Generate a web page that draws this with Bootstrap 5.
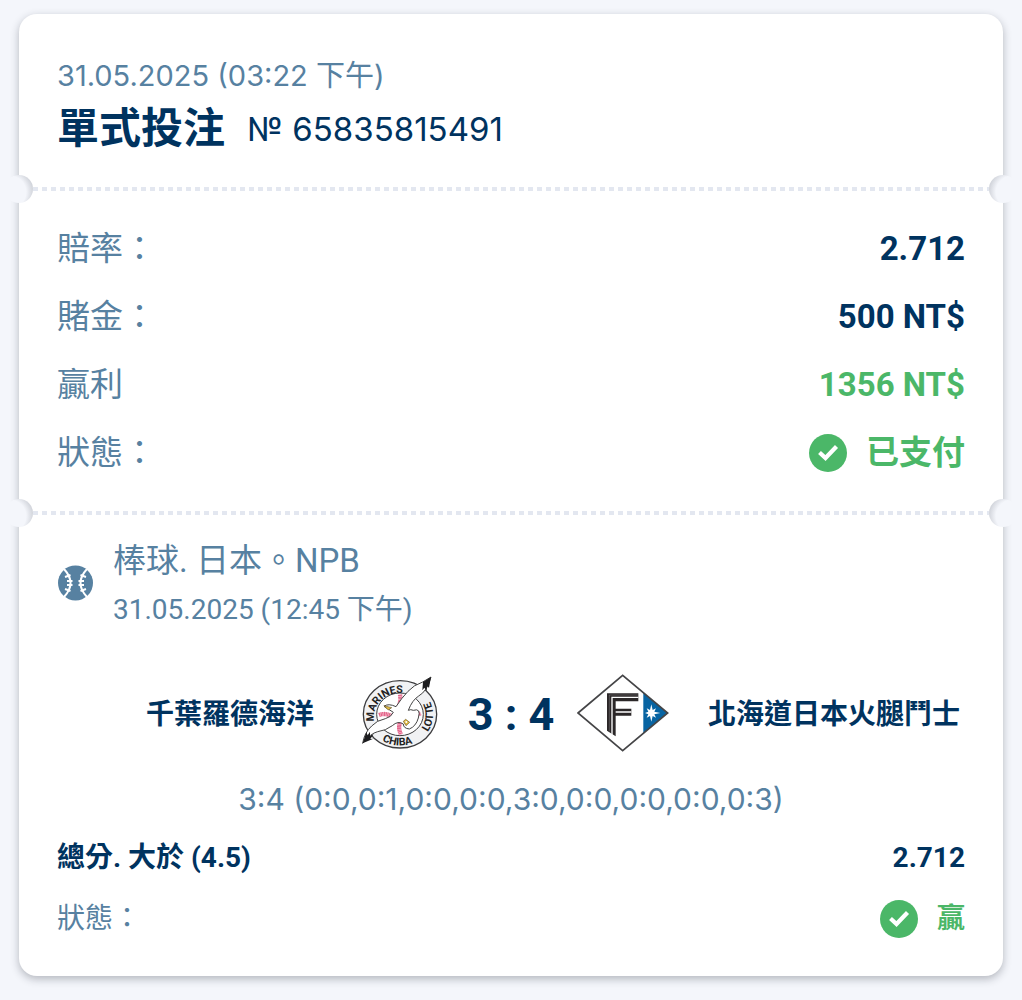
<!DOCTYPE html>
<html lang="zh-Hant">
<head>
<meta charset="utf-8">
<meta name="viewport" content="width=device-width, initial-scale=1">
<title>單式投注</title>
<link href="https://cdn.jsdelivr.net/npm/bootstrap@5.3.0/dist/css/bootstrap.min.css" rel="stylesheet">
<style>
  :root { --page: #f4f6fb; --ink: #00335f; --muted-blue: #5781a1; --win: #4bb768; }
  body { background: var(--page); color: var(--ink); font-family: Roboto, "Noto Sans CJK TC", sans-serif; }
  .geo { font-family: Inter, "Noto Sans CJK TC", sans-serif; }
  .tone-soft { color: var(--muted-blue); }
  .tone-win { color: var(--win); }
  .page-wrap { padding: 14px 19px 24px; }
  .ticket { border-radius: 18px; background: #fff; box-shadow: 0 3px 9px rgba(30, 35, 50, .3); }
  .ticket-part { padding: 0 38px; position: relative; }
  .part-head { padding-top: 42px; padding-bottom: 27px; }
  .part-sum { padding-top: 26px; padding-bottom: 26px; }
  .part-event { padding-top: 23px; padding-bottom: 27px; }
  .tear::before { content: ""; position: absolute; top: -2px; left: 14px; right: 14px; height: 4px;
    background: repeating-linear-gradient(90deg, #e3e7f0 0 5px, transparent 5px 9px); }
  .notch { position: absolute; top: -14px; width: 28px; height: 28px; border-radius: 50%; }
  .notch-l { left: -14px; background: radial-gradient(circle at 5px 17px, var(--page) 16px, #cdd0d7 24px); }
  .notch-r { right: -14px; background: radial-gradient(circle at 23px 17px, var(--page) 16px, #cdd0d7 24px); }
  .t28 { font-size: 28px; line-height: 40px; }
  .t29 { font-size: 29px; line-height: 40px; }
  .t30 { font-size: 30px; line-height: 40px; }
  .t33 { font-size: 33px; line-height: 50px; }
  .bet-kind { font-size: 42px; line-height: 66px; }
  .bet-no { font-size: 33px; line-height: 66px; margin-left: 22px; }
  .sum-row { height: 68px; }
  .pick-row { height: 61px; }
  .with-tick { gap: 19px; }
  .tick { width: 38px; height: 38px; }
  .sport { width: 36px; height: 36px; }
  .crest { width: 92px; height: 80px; }
  .versus { gap: 39px; height: 80px; margin-top: 43px; }
  .score { width: 132px; font-size: 45px; line-height: 60px; }
  .side { flex: 1 1 0; }
  .innings { margin-top: 26px; }
</style>
</head>
<body>
<svg width="0" height="0" class="position-absolute" aria-hidden="true">
  <symbol id="tick" viewBox="0 0 38 38"><circle cx="19" cy="19" r="19" fill="#4bb768"/><path d="M10.500 18.500 L16.500 24 L27.500 12.500" fill="none" stroke="#fff" stroke-width="4.200"/></symbol>
</svg>
<div class="page-wrap min-vh-100">
<main class="ticket">
  <header class="ticket-part part-head">
    <div class="geo tone-soft t29">31.05.2025 (03:22 下午)</div>
    <div class="d-flex align-items-center">
      <h1 class="bet-kind fw-bold mb-0">單式投注</h1>
      <span class="geo bet-no">№ 65835815491</span>
    </div>
  </header>

  <section class="ticket-part part-sum tear">
    <span class="notch notch-l"></span><span class="notch notch-r"></span>
    <dl class="mb-0 t33">
      <div class="sum-row d-flex align-items-center justify-content-between"><dt class="fw-normal tone-soft">賠率：</dt><dd class="mb-0 fw-bold">2.712</dd></div>
      <div class="sum-row d-flex align-items-center justify-content-between"><dt class="fw-normal tone-soft">賭金：</dt><dd class="mb-0 fw-bold">500 NT$</dd></div>
      <div class="sum-row d-flex align-items-center justify-content-between"><dt class="fw-normal tone-soft">贏利</dt><dd class="mb-0 fw-bold tone-win">1356 NT$</dd></div>
      <div class="sum-row d-flex align-items-center justify-content-between"><dt class="fw-normal tone-soft">狀態：</dt><dd class="mb-0 fw-bold tone-win d-flex align-items-center with-tick"><svg class="tick"><use href="#tick"/></svg>已支付</dd></div>
    </dl>
  </section>

  <section class="ticket-part part-event tear">
    <span class="notch notch-l"></span><span class="notch notch-r"></span>
    <div class="d-flex align-items-center tone-soft">
      <svg class="sport flex-shrink-0" viewBox="0 0 36 36" aria-hidden="true">
        <circle cx="18.500" cy="18" r="17.500" fill="#5781a1"/>
        <g fill="none" stroke="#fff" stroke-width="2">
          <path d="M7 4 Q20 18 7 32 M30 4 Q17 18 30 32"/>
          <path d="M8 12 L13.500 10 M10 16 H15.500 M10 20 H15.500 M8 24 L13.500 26 M29 12 L23.500 10 M27 16 H21.500 M27 20 H21.500 M29 24 L23.500 26"/>
        </g>
      </svg>
      <div class="ps-3 ms-1">
        <div class="t33">棒球. 日本。NPB</div>
        <div class="t28 mt-1">31.05.2025 (12:45 下午)</div>
      </div>
    </div>

    <div class="versus d-flex align-items-center">
      <div class="side t28 fw-bold text-end text-nowrap pt-1">千葉羅德海洋</div>
      <div class="d-flex align-items-center">
        <svg class="crest" viewBox="39 39 276 240" role="img" aria-label="Chiba Lotte Marines">
          <defs>
            <path id="arcTop" d="M103 186 A79 73 0 0 1 254 145"/>
            <path id="arcLow" d="M84 188 A99 90 0 0 0 279 163 A99 90 0 0 0 226 82"/>
          </defs>
          <ellipse cx="180" cy="163" rx="110" ry="101" fill="#f1f2f4" stroke="#3c3c3e" stroke-width="4"/>
          <ellipse cx="180" cy="163" rx="70" ry="64" fill="#fff" stroke="#3c3c3e" stroke-width="3"/>
          <g fill="none" stroke="#e5658b" stroke-width="13" stroke-dasharray="4 1">
            <path d="M180 104 Q184 126 174 142 M117 165 Q135 158 155 168 M202 160 Q225 168 242 160 M181 184 Q173 203 183 224"/>
          </g>
          <path d="M273 51 Q262 93 236 108 Q216 121 205 151 Q212 147 220 151 Q244 143 235 174 Q228 199 208 207 Q190 205 190 192 Q174 181 157 197 Q137 212 113 215 Q92 220 68 250 Q73 218 95 198 Q110 181 136 176 Q153 172 160 157 L132 139 Q145 129 168 140 Q184 115 204 94 Q221 75 248 66 Z" fill="#fff" stroke="#444" stroke-width="3"/>
          <g font-family="Roboto, sans-serif" font-weight="700" font-size="32" fill="#222">
            <text><textPath href="#arcTop" startOffset="2">MARINES</textPath></text>
            <text><textPath href="#arcLow" startOffset="70">CHIBA</textPath></text>
            <text><textPath href="#arcLow" startOffset="222">LOTTE</textPath></text>
          </g>
          <path d="M273 51 L267 83 L261 79 L260 92 L253 83 L247 91 L249 66 Z M68 250 L79 216 L83 226 L90 215 L90 228 L101 222 L91 237 L100 236 Z" fill="#1d1d1f"/>
          <path d="M132 137 L155 143 L145 150 Z M190 184 L197 178 L209 187 L198 197 Z" fill="#e4bd43" stroke="#665526" stroke-width="2"/>
          <circle cx="199" cy="186" r="3" fill="#fff"/>
        </svg>
        <div class="score fw-bold text-center text-nowrap pt-1">3 : 4</div>
        <svg class="crest" viewBox="51 39 276 240" role="img" aria-label="Hokkaido Nippon-Ham Fighters">
          <path d="M54 159 L188 46 L323 159 L188 272 Z" fill="#fff"/>
          <path d="M250 98 L323 159 L250 220 Z" fill="#0864a2"/>
          <path d="M54 159 L188 46 L323 159 L188 272 Z" fill="none" stroke="#454547" stroke-width="5"/>
          <path d="M141 100 H235 V124 H167 V146 H214 V167 H167 V229 L141 212 Z" fill="#2b2728"/>
          <path d="M156 224 V112 H235 M167 156 H214" fill="none" stroke="#fff" stroke-width="4"/>
          <path d="M148 214 V105 H235" fill="none" stroke="#aaa7a8" stroke-width="1"/>
          <path d="M274 133 L278 150 L288 145 L283 155 L301 159 L283 163 L288 173 L278 168 L274 185 L270 168 L260 173 L265 163 L255 159 L265 155 L260 145 L270 150 Z" fill="#fff"/>
        </svg>
      </div>
      <div class="side t28 fw-bold text-nowrap pt-1">北海道日本火腿鬥士</div>
    </div>

    <div class="geo tone-soft t30 text-center innings">3:4 (0:0,0:1,0:0,0:0,3:0,0:0,0:0,0:0,0:3)</div>

    <div class="t28 mt-2">
      <div class="pick-row d-flex align-items-center justify-content-between fw-bold"><span>總分. 大於 (4.5)</span><span>2.712</span></div>
      <div class="pick-row d-flex align-items-center justify-content-between"><span class="tone-soft">狀態：</span><span class="tone-win fw-bold d-flex align-items-center with-tick"><svg class="tick"><use href="#tick"/></svg>贏</span></div>
    </div>
  </section>
</main>
</div>
<script src="https://cdn.jsdelivr.net/npm/bootstrap@5.3.0/dist/js/bootstrap.bundle.min.js"></script>
</body>
</html>
